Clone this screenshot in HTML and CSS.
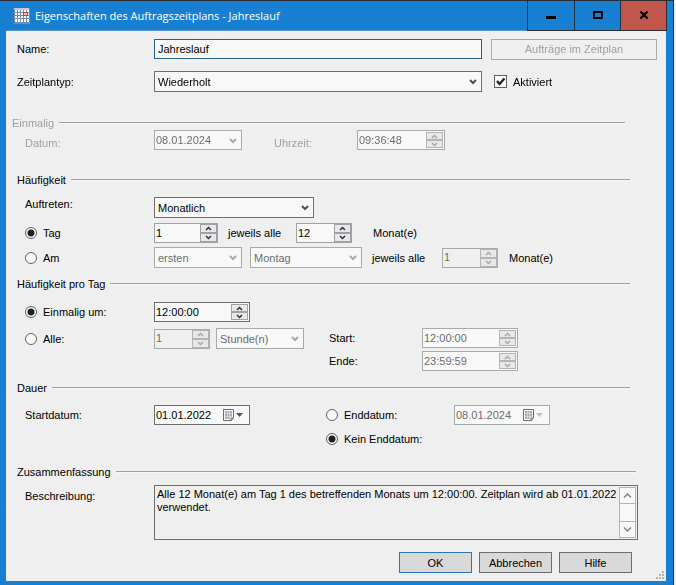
FILE: index.html
```html
<!DOCTYPE html>
<html lang="de">
<head>
  <meta charset="UTF-8">
  <title>Eigenschaften des Auftragszeitplans - Jahreslauf</title>
  <link rel="stylesheet" href="styles.css">
</head>
<body>
  <!-- shared glyphs -->
  <svg class="symbols" width="0" height="0">
    <symbol id="chevron" viewBox="0 0 8 6">
      <path d="M1 1 L4 4 L7 1" fill="none" stroke="currentColor" stroke-width="2"/>
    </symbol>
    <symbol id="up" viewBox="0 0 7 5">
      <path d="M1 4 L3.5 1.5 L6 4" fill="none" stroke="currentColor" stroke-width="1.5"/>
    </symbol>
    <symbol id="down" viewBox="0 0 7 5">
      <path d="M1 1 L3.5 3.5 L6 1" fill="none" stroke="currentColor" stroke-width="1.5"/>
    </symbol>
    <symbol id="calendar" viewBox="0 0 20 12">
      <path d="M.5 .5 H10.500 V8.500 L8.500 11.500 H.5 Z" fill="#f8f8f8" stroke="#6d6a70"/>
      <path d="M8 11.500 V9 H10.500" fill="none" stroke="#6d6a70"/>
      <path d="M2 2 H9 V8 H7 V10 H2 Z" fill="#a9acb8"/>
      <path d="M2 4.500 H9 M2 7.500 H9 M4.500 2 V10 M6.500 2 V10" stroke="#e4e6ee" stroke-width=".6"/>
      <path d="M13 4 H20 L16.500 8 Z" fill="currentColor"/>
    </symbol>
  </svg>

  <div class="window">
    <header class="titlebar">
      <svg class="app-icon" width="16" height="16" viewBox="0 0 16 16">
        <rect width="16" height="16" fill="#6f8db5"/>
        <rect width="15" height="2" fill="#b9cdea"/>
        <path d="M1 2h2v2H1z M4 2h2v2H4z M7 2h2v2H7z M10 2h2v2h-2z M13 2h2v2h-2z M1 5h2v2H1z M4 5h2v2H4z M7 5h2v2H7z M13 5h2v2h-2z M1 8h2v2H1z M4 8h2v2H4z M7 8h2v2H7z M10 8h2v2h-2z M13 8h2v2h-2z M1 11h2v3H1z M4 11h2v3H4z M7 11h2v3H7z M10 11h2v3h-2z M13 11h2v3h-2z" fill="#fff"/>
        <rect x="9.500" y="4.500" width="4" height="3" fill="#f3c3a8" stroke="#d8402a"/>
      </svg>
      <h1>Eigenschaften des Auftragszeitplans - Jahreslauf</h1>
      <div class="window-buttons">
        <button type="button" aria-label="Minimieren">
          <svg width="10" height="10"><rect y="6" width="10" height="3"/></svg>
        </button>
        <button type="button" aria-label="Maximieren">
          <svg width="10" height="10"><path d="M0 1H10V9H0Z M2 3V7H8V3Z" fill-rule="evenodd"/></svg>
        </button>
        <button type="button" class="close" aria-label="Schließen">
          <svg width="10" height="10"><path d="M1.500 1.500 L8.500 8.500 M8.500 1.500 L1.500 8.500" stroke="#000" stroke-width="2.400"/></svg>
        </button>
      </div>
    </header>

    <form class="content">
      <div class="row top-row">
        <label class="caption" for="name">Name:</label>
        <input class="text-box focused" type="text" id="name" value="Jahreslauf" autofocus>
        <span class="side"><button class="btn wide" type="button" disabled>Aufträge im Zeitplan</button></span>
      </div>
      <div class="row top-row type-row">
        <label class="caption" for="type">Zeitplantyp:</label>
        <span class="combo grow">
          <select id="type"><option>Wiederholt</option></select>
          <svg width="8" height="6"><use href="#chevron"/></svg>
        </span>
        <span class="side check">
          <span class="check-box">
            <input type="checkbox" id="active" checked>
            <svg width="11" height="11"><path d="M2 5 L4.500 8 L9.500 2.500" fill="none" stroke="#222" stroke-width="2.200"/></svg>
          </span>
          <label for="active">Aktiviert</label>
        </span>
      </div>

      <section class="group once disabled">
        <h2>Einmalig</h2>
        <div class="row">
          <label class="caption" for="date">Datum:</label>
          <span class="combo date w88 off">
            <input type="text" id="date" value="08.01.2024" disabled>
            <svg width="8" height="6"><use href="#chevron"/></svg>
          </span>
          <label class="time-label" for="time">Uhrzeit:</label>
          <span class="spin time w88 off">
            <input type="text" id="time" value="09:36:48" disabled>
            <span class="arrows">
              <button type="button" aria-label="Mehr" disabled><svg width="7" height="5"><use href="#up"/></svg></button>
              <button type="button" aria-label="Weniger" disabled><svg width="7" height="5"><use href="#down"/></svg></button>
            </span>
          </span>
        </div>
      </section>

      <section class="group frequency">
        <h2>Häufigkeit</h2>
        <div class="row occurs">
          <label class="caption" for="occurs">Auftreten:</label>
          <span class="combo w160">
            <select id="occurs"><option>Monatlich</option></select>
            <svg width="8" height="6"><use href="#chevron"/></svg>
          </span>
        </div>
        <div class="row day-row">
          <span class="caption option">
            <input type="radio" name="mode" id="mode-day" checked>
            <label for="mode-day">Tag</label>
          </span>
          <span class="spin w64">
            <input type="text" value="1" aria-label="Tag">
            <span class="arrows">
              <button type="button" aria-label="Mehr"><svg width="7" height="5"><use href="#up"/></svg></button>
              <button type="button" aria-label="Weniger"><svg width="7" height="5"><use href="#down"/></svg></button>
            </span>
          </span>
          <label class="every" for="every-day">jeweils alle</label>
          <span class="spin w56">
            <input type="text" id="every-day" value="12">
            <span class="arrows">
              <button type="button" aria-label="Mehr"><svg width="7" height="5"><use href="#up"/></svg></button>
              <button type="button" aria-label="Weniger"><svg width="7" height="5"><use href="#down"/></svg></button>
            </span>
          </span>
          <span class="unit far">Monat(e)</span>
        </div>
        <div class="row">
          <span class="caption option">
            <input type="radio" name="mode" id="mode-at">
            <label for="mode-at">Am</label>
          </span>
          <span class="combo w88 off">
            <select aria-label="Reihenfolge" disabled><option>ersten</option></select>
            <svg width="8" height="6"><use href="#chevron"/></svg>
          </span>
          <span class="combo w112 off next">
            <select aria-label="Wochentag" disabled><option>Montag</option></select>
            <svg width="8" height="6"><use href="#chevron"/></svg>
          </span>
          <label class="every wide-every" for="every-at">jeweils alle</label>
          <span class="spin w56 off plain">
            <input type="text" id="every-at" value="1" disabled>
            <span class="arrows">
              <button type="button" aria-label="Mehr" disabled><svg width="7" height="5"><use href="#up"/></svg></button>
              <button type="button" aria-label="Weniger" disabled><svg width="7" height="5"><use href="#down"/></svg></button>
            </span>
          </span>
          <span class="unit">Monat(e)</span>
        </div>
      </section>

      <section class="group daily">
        <h2>Häufigkeit pro Tag</h2>
        <div class="row once-at">
          <span class="caption option">
            <input type="radio" name="daily" id="daily-once" checked>
            <label for="daily-once">Einmalig um:</label>
          </span>
          <span class="spin time w96">
            <input type="text" value="12:00:00" aria-label="Uhrzeit">
            <span class="arrows">
              <button type="button" aria-label="Mehr"><svg width="7" height="5"><use href="#up"/></svg></button>
              <button type="button" aria-label="Weniger"><svg width="7" height="5"><use href="#down"/></svg></button>
            </span>
          </span>
        </div>
        <div class="columns">
          <div class="row first">
            <span class="caption option">
              <input type="radio" name="daily" id="daily-every">
              <label for="daily-every">Alle:</label>
            </span>
            <span class="spin w56 off plain">
              <input type="text" value="1" aria-label="Intervall" disabled>
              <span class="arrows">
                <button type="button" aria-label="Mehr" disabled><svg width="7" height="5"><use href="#up"/></svg></button>
                <button type="button" aria-label="Weniger" disabled><svg width="7" height="5"><use href="#down"/></svg></button>
              </span>
            </span>
            <span class="combo w88 off next">
              <select aria-label="Einheit" disabled><option>Stunde(n)</option></select>
              <svg width="8" height="6"><use href="#chevron"/></svg>
            </span>
          </div>
          <div class="range">
            <label for="start">Start:</label>
            <span class="spin time w96 off">
              <input type="text" id="start" value="12:00:00" disabled>
              <span class="arrows">
                <button type="button" aria-label="Mehr" disabled><svg width="7" height="5"><use href="#up"/></svg></button>
                <button type="button" aria-label="Weniger" disabled><svg width="7" height="5"><use href="#down"/></svg></button>
              </span>
            </span>
            <label for="end">Ende:</label>
            <span class="spin time w96 off">
              <input type="text" id="end" value="23:59:59" disabled>
              <span class="arrows">
                <button type="button" aria-label="Mehr" disabled><svg width="7" height="5"><use href="#up"/></svg></button>
                <button type="button" aria-label="Weniger" disabled><svg width="7" height="5"><use href="#down"/></svg></button>
              </span>
            </span>
          </div>
        </div>
      </section>

      <section class="group duration">
        <h2>Dauer</h2>
        <div class="columns">
          <div class="row first">
            <label class="caption" for="start-date">Startdatum:</label>
            <span class="combo date w96">
              <input type="text" id="start-date" value="01.01.2022">
              <svg width="20" height="12"><use href="#calendar"/></svg>
            </span>
          </div>
          <div class="range">
            <span class="option">
              <input type="radio" name="end" id="end-on">
              <label for="end-on">Enddatum:</label>
            </span>
            <span class="combo date w96 off">
              <input type="text" value="08.01.2024" aria-label="Enddatum" disabled>
              <svg width="20" height="12"><use href="#calendar"/></svg>
            </span>
            <span class="option">
              <input type="radio" name="end" id="end-none" checked>
              <label for="end-none">Kein Enddatum:</label>
            </span>
          </div>
        </div>
      </section>

      <section class="group summary">
        <h2>Zusammenfassung</h2>
        <div class="row">
          <label class="caption" for="description">Beschreibung:</label>
          <div class="memo">
            <textarea id="description" readonly>Alle 12 Monat(e) am Tag 1 des betreffenden Monats um 12:00:00. Zeitplan wird ab 01.01.2022 verwendet.</textarea>
            <div class="scroll">
              <button type="button" aria-label="Nach oben"><svg width="9" height="7"><path d="M1 5.500 L4.500 2 L8 5.500"/></svg></button>
              <button type="button" aria-label="Nach unten"><svg width="9" height="7"><path d="M1 1.500 L4.500 5 L8 1.500"/></svg></button>
            </div>
          </div>
        </div>
      </section>

      <footer class="actions">
        <button class="btn default" type="button">OK</button>
        <button class="btn" type="button">Abbrechen</button>
        <button class="btn" type="button">Hilfe</button>
      </footer>
      <svg class="grip" width="9" height="9" fill="#b4b4b4"><path d="M6 0h2v2H6z M3 3h2v2H3z M6 3h2v2H6z M0 6h2v2H0z M3 6h2v2H3z M6 6h2v2H6z"/></svg>
    </form>
  </div>
</body>
</html>
```
FILE: styles.css
```css
* { box-sizing: border-box; }
body {
  margin: 0;
  padding-right: 2px;
  background: #f0f0f0;
  font-family: "Liberation Sans", Arial, sans-serif;
  font-size: 11px;
  line-height: 14px;
  color: #000;
}
input, select, textarea, button {
  font: inherit;
  color: inherit;
  margin: 0;
  border-radius: 0;
}
svg { display: block; }
.symbols { position: absolute; }

/* window frame */
.window {
  display: flex;
  flex-direction: column;
  min-height: 100vh;
  border-top: 1px solid #2b2f33;
  border-right: 1px solid #1c2b3a;
  background: #1880d3;
  padding: 0 7px 4px 6px;
}
.titlebar {
  display: flex;
  align-items: center;
  height: 30px;
  padding-left: 8px;
  border-bottom: 1px solid #5b98c8;
  margin-right: -1px;
}
.titlebar h1 {
  flex: 1;
  margin: 0 0 0 5px;
  font-family: "Open Sans", sans-serif;
  font-size: 11px;
  font-weight: normal;
  color: #fff;
}
.window-buttons {
  display: flex;
  height: 30px;
  border: 1px solid #2b2f33;
  border-top: 0;
}
.window-buttons button {
  display: flex;
  justify-content: center;
  align-items: center;
  width: 46px;
  padding: 0;
  border: 0;
  background: #1880d3;
}
.window-buttons button + button { border-left: 1px solid #2b2f33; }
.window-buttons .close { background: #c1564d; }

.content {
  position: relative;
  flex: 1;
  padding: 8px 9px 8px 11px;
  background: #efefef;
}
.row, .option, .check {
  display: flex;
  align-items: center;
}
.caption {
  flex: none;
  width: 129px;
}
.top-row .caption { width: 137px; }
.type-row { margin-top: 12px; }
.side {
  width: 166px;
  margin-left: 9px;
}
.check {
  gap: 6px;
  padding-left: 3px;
}

/* groups */
.group h2 {
  display: flex;
  align-items: center;
  gap: 5px;
  margin: 0 27px 0 0;
  font-size: 11px;
  line-height: 14px;
  font-weight: normal;
}
.group h2::after {
  content: "";
  flex: 1;
  border-top: 1px solid #a0a0a0;
  border-bottom: 1px solid #f8f8f8;
}
.group > .row, .columns { padding-left: 8px; }
.once { margin-top: 24px; }
.once h2 { margin: 0 32px 0 -5px; }
.once .row { align-items: flex-end; }
.disabled { color: #a0a0a0; }
.frequency { margin-top: 23px; }
.occurs {
  align-items: flex-start;
  margin-top: 10px;
}
.day-row { margin: 5px 0 4px; }
.daily { margin-top: 9px; }
.once-at { margin: 11px 0 6px; }
.duration { margin-top: 10px; }
.duration .columns { margin-top: 10px; }
.summary { margin-top: 16px; }
.summary h2 { margin-right: 21px; }
.summary .row {
  align-items: flex-start;
  margin: 6px 19px 0 0;
}
.summary .caption { padding-top: 4px; }

.columns {
  display: flex;
  align-items: flex-start;
}
.first { width: 304px; }
.range {
  display: grid;
  grid-template-columns: 93px auto;
  grid-auto-rows: 20px;
  row-gap: 3px;
  align-items: center;
}
.duration .first { width: 301px; }
.duration .range {
  grid-template-columns: 128px auto;
  row-gap: 4px;
}
.time-label {
  width: 83px;
  margin-left: 32px;
}
.every {
  flex: none;
  width: 68px;
  margin-left: 10px;
}
.wide-every { width: 70px; }
.unit { margin-left: 11px; }
.far { margin-left: 21px; }
.next { margin-left: 8px; }
.daily .next { margin-left: 6px; }

/* fields */
.text-box, .combo, .spin, .memo {
  border: 1px solid #6e6e6e;
  background: #f8f8f8;
}
.text-box {
  flex: 1;
  min-width: 0;
  height: 20px;
  padding: 0 3px;
  outline: 0;
}
.focused { border-color: #23618f; }
.grow { flex: 1; }
.w56 { width: 56px; }
.w64 { width: 64px; }
.w88 { width: 88px; }
.w96 { width: 96px; }
.w112 { width: 112px; }
.w160 { width: 160px; }

.combo {
  position: relative;
  display: block;
  height: 21px;
  color: #000;
}
.combo select, .combo input, .spin input {
  display: block;
  width: 100%;
  min-width: 0;
  height: 100%;
  padding: 0 3px;
  border: 0;
  background: none;
  opacity: 1;
  outline: 0;
  appearance: none;
}
.combo svg {
  position: absolute;
  right: 4px;
  top: 7px;
  color: #505050;
  pointer-events: none;
}
.date { height: 20px; }
.date input, .spin input { padding: 0 1px 1px; }
.duration .combo svg {
  right: 6px;
  top: 3px;
  color: #3a5a80;
}
.spin {
  display: flex;
  height: 20px;
  border-color: #a0a0a8;
  color: #000;
}
.arrows {
  flex: none;
  display: flex;
  flex-direction: column;
  width: 17px;
}
.arrows button {
  flex: 1;
  display: flex;
  justify-content: center;
  align-items: center;
  padding: 0;
  border: 1px solid #a0a0a8;
  background: #e8e8e8;
  color: #303030;
}
.time { border-color: #6e6e6e; }
.time .arrows { margin: 1px; }
.off, .off select, .off input { color: #6d6d6d; }
.off { border-color: #a5adab; }
.off .arrows button {
  border-color: #b4b4b4;
  color: #808080;
}
.off svg { color: #a8a8a8; }
.duration .off svg { color: #c0c4bc; }
.plain { background: #efefef; }

/* ticks and radios */
.option { gap: 6px; }
input[type="radio"] {
  appearance: none;
  width: 12px;
  height: 12px;
  border: 1px solid #606060;
  border-radius: 50%;
  background: #fbfbfb;
}
input[type="radio"]:checked { background: radial-gradient(circle, #202020 3px, #fbfbfb 4px); }
.check-box { position: relative; }
.check-box input {
  display: block;
  appearance: none;
  width: 13px;
  height: 13px;
  border: 1px solid #606060;
  background: #fbfbfb;
}
.check-box svg {
  position: absolute;
  left: 1px;
  top: 1px;
  pointer-events: none;
}

/* description */
.memo {
  flex: 1;
  display: flex;
  height: 55px;
  padding: 1px;
  background: #efefef;
}
.memo textarea {
  flex: 1;
  min-width: 0;
  padding: 1px;
  border: 0;
  background: none;
  line-height: 13px;
  resize: none;
  outline: 0;
  overflow: hidden;
}
.scroll {
  display: flex;
  flex-direction: column;
  justify-content: space-between;
  width: 17px;
  border: 1px solid #b4b4b4;
  background: #f8f8f8;
}
.scroll button {
  display: flex;
  justify-content: center;
  align-items: center;
  height: 16px;
  padding: 0;
  border: 0;
  border-bottom: 1px solid #b4b4b4;
  background: none;
}
.scroll button + button {
  border-top: 1px solid #b4b4b4;
  border-bottom: 0;
}
.scroll path {
  fill: none;
  stroke: #858585;
  stroke-width: 1.5;
}

/* buttons */
.btn {
  width: 73px;
  height: 21px;
  padding: 0;
  border: 1px solid #6e6e6e;
  background: #d9d9d9;
}
.wide { width: 100%; }
.btn:disabled {
  border-color: #a5adab;
  background: #efefef;
  color: #a0a0a0;
}
.default { border-color: #2e75b6; }
.side .btn { display: block; }
.top-row:first-child { height: 20px; }
.actions {
  display: flex;
  justify-content: flex-end;
  gap: 7px;
  margin: 12px 25px 0 0;
}
.grip {
  position: absolute;
  right: 1px;
  bottom: 1px;
}
```
